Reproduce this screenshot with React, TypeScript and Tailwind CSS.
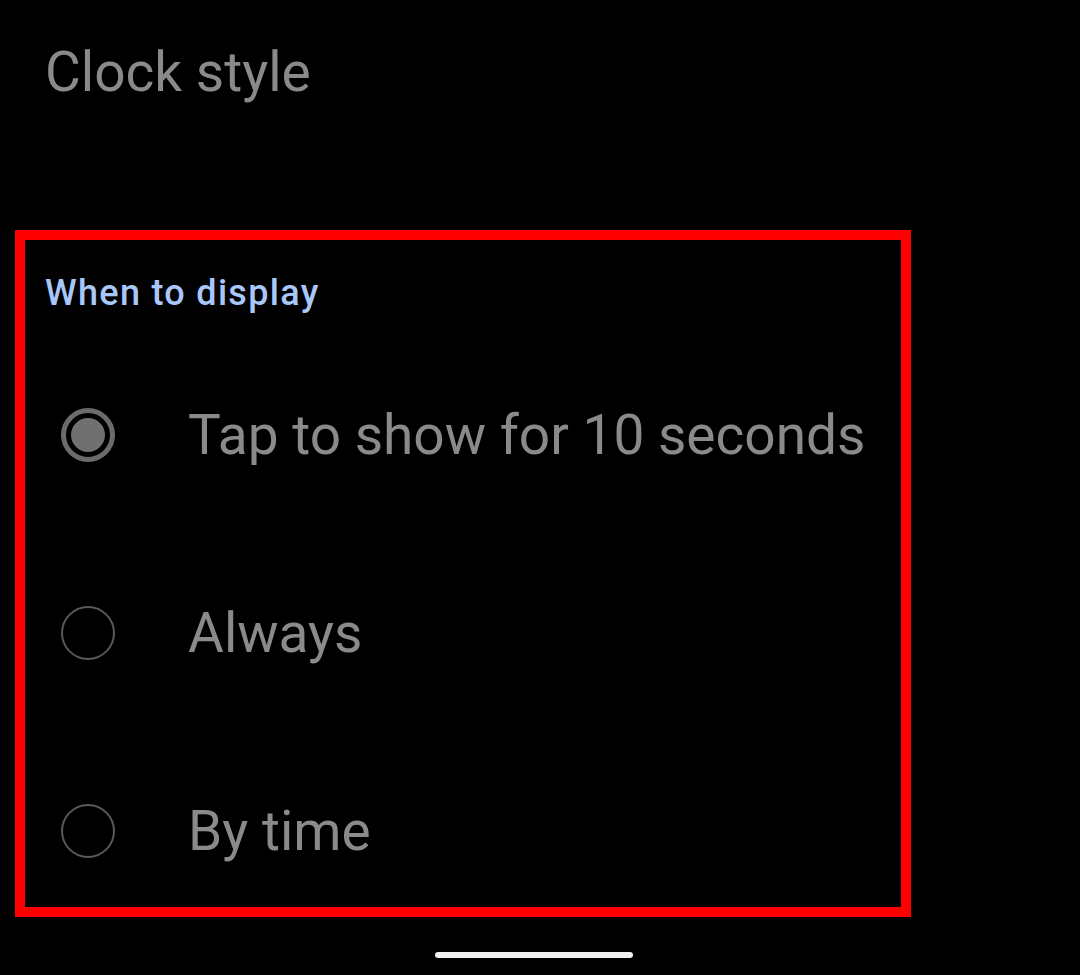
import React from "react";

function Radio({ selected }: { selected: boolean }) {
  return selected ? (
    <div className="w-[54px] h-[54px] rounded-full border-[5px] border-[#6b6b6b] flex items-center justify-center shrink-0">
      <div className="w-[34px] h-[34px] rounded-full bg-[#707070]" />
    </div>
  ) : (
    <div className="w-[54px] h-[54px] rounded-full border-[2px] border-[#595959] shrink-0" />
  );
}

export default function App() {
  const options = [
    { label: "Tap to show for 10 seconds", selected: true },
    { label: "Always", selected: false },
    { label: "By time", selected: false },
  ];
  return (
    <div
      className="w-[1080px] h-[975px] bg-black flex flex-col overflow-hidden"
      style={{ fontFamily: "Roboto, 'Noto Sans', sans-serif" }}
    >
      <div className="pt-[45px] pl-[45px] text-[55px] leading-none text-[#8a8a8a]">
        Clock style
      </div>
      <div className="mt-[130px] ml-[15px] w-[896px] h-[687px] border-[10px] border-[#ff0000] flex flex-col pt-[35px] pl-[20px]">
        <div className="text-[36px] leading-none font-medium tracking-[1.3px] text-[#a8c7fa]">
          When to display
        </div>
        <div className="mt-[64px] flex flex-col gap-[78px]">
          {options.map((o) => (
            <div key={o.label} className="h-[120px] flex items-center">
              <div className="ml-[16px] w-[127px] flex">
                <Radio selected={o.selected} />
              </div>
              <div className="text-[55px] leading-none text-[#8a8a8a]">{o.label}</div>
            </div>
          ))}
        </div>
      </div>
      <div className="flex justify-center mt-[35px]">
        <div className="w-[198px] h-[6px] rounded-full bg-[#f0f0f0] ml-[-12px]" />
      </div>
    </div>
  );
}
